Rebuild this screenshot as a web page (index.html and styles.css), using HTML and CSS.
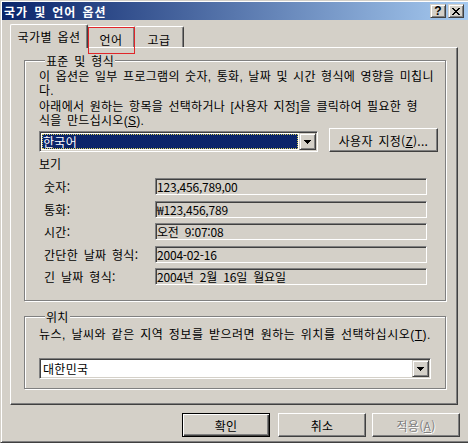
FILE: index.html
```html
<!DOCTYPE html>
<html lang="ko">
<head>
    <meta charset="UTF-8">
    <meta name="viewport" content="width=device-width, initial-scale=1.0">
    <title>국가 및 언어 옵션</title>
    <link rel="stylesheet" href="styles.css">
</head>
<body>
    <div class="window">
        <div class="titlebar">
            <span class="title">국가 및 언어 옵션</span>
            <div class="caption-buttons">
                <span class="cap-btn help">?</span>
                <span class="cap-btn close">
                    <svg width="8" height="7" viewBox="0 0 8 7" shape-rendering="crispEdges">
                        <path d="M0 0h2v1h-2z M6 0h2v1h-2z M1 1h2v1h-2z M5 1h2v1h-2z M2 2h4v1h-4z M3 3h2v1h-2z M2 4h4v1h-4z M1 5h2v1h-2z M5 5h2v1h-2z M0 6h2v1h-2z M6 6h2v1h-2z" fill="#000"/>
                    </svg>
                </span>
            </div>
        </div>

        <div class="client">
            <div class="tabs">
                <div class="tab active">국가별 옵션</div>
                <div class="tab marked">언어<span class="mark"></span></div>
                <div class="tab">고급</div>
            </div>

            <div class="panel">
                <fieldset class="group group-format">
                    <legend>표준 및 형식</legend>
                    <p class="desc">이 옵션은 일부 프로그램의 숫자, 통화, 날짜 및 시간 형식에 영향을 미칩니<br>다.</p>
                    <p class="desc desc-second">아래에서 원하는 항목을 선택하거나 [사용자 지정]을 클릭하여 필요한 형<br>식을 만드십시오(<u>S</u>).</p>

                    <div class="select-row">
                        <div class="combo combo-lang">
                            <span class="combo-value highlighted">한국어</span>
                            <span class="combo-arrow">
                                <svg width="7" height="4" viewBox="0 0 7 4" shape-rendering="crispEdges"><path d="M0 0h7v1h-1v1h-1v1h-1v1h-1v-1h-1v-1h-1v-1h-1z" fill="#000"/></svg>
                            </span>
                        </div>
                        <button class="btn btn-custom">사용자 지정(<u>Z</u>)...</button>
                    </div>

                    <p class="sample-title">보기</p>
                    <div class="samples">
                        <div class="sample-row"><span class="sample-label">숫자:</span><span class="field">123,456,789,00</span></div>
                        <div class="sample-row"><span class="sample-label">통화:</span><span class="field">₩123,456,789</span></div>
                        <div class="sample-row"><span class="sample-label">시간:</span><span class="field">오전 9:07:08</span></div>
                        <div class="sample-row"><span class="sample-label">간단한 날짜 형식:</span><span class="field">2004-02-16</span></div>
                        <div class="sample-row"><span class="sample-label">긴 날짜 형식:</span><span class="field">2004년 2월 16일 월요일</span></div>
                    </div>
                </fieldset>

                <fieldset class="group group-location">
                    <legend>위치</legend>
                    <p class="desc desc-location">뉴스, 날씨와 같은 지역 정보를 받으려면 원하는 위치를 선택하십시오(<u>T</u>).</p>
                    <div class="combo combo-location">
                        <span class="combo-value">대한민국</span>
                        <span class="combo-arrow">
                            <svg width="7" height="4" viewBox="0 0 7 4" shape-rendering="crispEdges"><path d="M0 0h7v1h-1v1h-1v1h-1v1h-1v-1h-1v-1h-1v-1h-1z" fill="#000"/></svg>
                        </span>
                    </div>
                </fieldset>
            </div>

            <div class="actions">
                <button class="btn btn-default">확인</button>
                <button class="btn">취소</button>
                <button class="btn btn-disabled">적용(<u>A</u>)</button>
            </div>
        </div>
    </div>
</body>
</html>
```

FILE: styles.css
```css
:root {
    --face: #d4d0c8;
    --light: #ffffff;
    --shadow: #808080;
    --dark: #404040;
    --title-start: #0a246a;
    --title-end: #a6caf0;
}

* {
    box-sizing: border-box;
    margin: 0;
    padding: 0;
}

html, body {
    width: 468px;
    height: 443px;
    overflow: hidden;
}

body {
    background-color: var(--face);
    font-family: "Noto Sans CJK KR", "Noto Sans", sans-serif;
    font-size: 12px;
    line-height: 13px;
    word-spacing: 2px;
    color: #000;
}

.window {
    width: 468px;
    height: 443px;
    background-color: var(--face);
    border-style: solid;
    border-width: 1px 0 1px 1px;
    border-color: var(--face) var(--dark) var(--dark) var(--face);
    box-shadow: inset 1px 1px var(--light), inset 0 -1px var(--shadow);
    padding: 1px 0 1px 1px;
    display: flex;
    flex-direction: column;
}

/* title bar */
.titlebar {
    height: 18px;
    flex-shrink: 0;
    display: flex;
    align-items: center;
    justify-content: space-between;
    padding: 0 4px 0 2px;
    background: linear-gradient(to right, var(--title-start), var(--title-end));
}

.title {
    color: #fff;
    font-weight: 700;
    letter-spacing: 0.9px;
}

.caption-buttons {
    display: flex;
    gap: 2px;
}

.cap-btn {
    width: 16px;
    height: 14px;
    display: flex;
    align-items: center;
    justify-content: center;
    background-color: var(--face);
    border: 1px solid;
    border-color: var(--face) var(--dark) var(--dark) var(--face);
    box-shadow: inset 1px 1px var(--light), inset -1px -1px var(--shadow);
}

.cap-btn.help {
    font-family: "Liberation Sans", sans-serif;
    font-weight: 700;
    font-size: 12px;
    line-height: 12px;
    padding-bottom: 1px;
}

.cap-btn.close svg {
    display: block;
    margin-top: 1px;
}

/* dialog client area */
.client {
    flex: 1;
    padding: 4px 10px 0 8px;
    display: flex;
    flex-direction: column;
}

.tabs {
    height: 23px;
    display: flex;
    align-items: flex-end;
}

.tab {
    height: 21px;
    padding-top: 6px;
    text-align: center;
    letter-spacing: 0.4px;
    background-color: var(--face);
    border-top: 1px solid var(--light);
    border-left: 1px solid var(--light);
    border-right: 1px solid var(--dark);
    box-shadow: inset -1px 0 var(--shadow);
    border-radius: 2px 2px 0 0;
}

.tab.active {
    width: 78px;
    height: 24px;
    padding-top: 5px;
    margin-bottom: -1px;
    position: relative;
    z-index: 1;
}

.tab.marked {
    width: 47px;
    border-left: none;
    position: relative;
}

.tab:last-child {
    width: 49px;
    border-left: none;
}

/* annotation box drawn over the second tab */
.mark {
    position: absolute;
    left: 0;
    top: 0;
    width: 47px;
    height: 27px;
    border: 1px solid #e0262a;
    z-index: 2;
}

.panel {
    height: 358px;
    background-color: var(--face);
    border-style: solid;
    border-width: 1px;
    border-color: var(--light) var(--dark) var(--dark) var(--light);
    box-shadow: inset -1px -1px var(--shadow);
}

/* group boxes */
.group {
    border: 1px solid var(--shadow);
    box-shadow: inset 1px 1px var(--light), 1px 1px var(--light);
    margin: 6px 11px 0 13px;
    padding: 3px 0 15px 14px;
    min-width: 0;
}

.group legend {
    margin-left: 6px;
    padding: 0 1px;
    line-height: 13px;
    letter-spacing: 0.3px;
    background-color: var(--face);
}

.group-location {
    margin-top: 9px;
    padding: 6px 0 9px 14px;
}

.desc {
    font-family: "Liberation Sans", "Noto Sans CJK KR", sans-serif;
    line-height: 14px;
    white-space: nowrap;
    letter-spacing: 0.3px;
    word-spacing: 1.7px;
}

.desc-second {
    margin-top: 2px;
}

.desc-location {
    line-height: 13px;
    letter-spacing: 0.5px;
}

.select-row {
    display: flex;
    align-items: flex-start;
}

/* combo boxes */
.combo {
    height: 21px;
    display: flex;
    background-color: #fff;
    border: 1px solid;
    border-color: var(--shadow) var(--light) var(--light) var(--shadow);
    box-shadow: inset 1px 1px var(--dark), inset -1px -1px var(--face);
    padding: 1px;
}

.combo-lang {
    width: 279px;
    margin-top: 3px;
}

.combo-location {
    width: 392px;
    margin-top: 16px;
}

.combo-value {
    flex: 1;
    padding-left: 2px;
    line-height: 17px;
    letter-spacing: 0.3px;
}

.combo-value.highlighted {
    margin: 1px;
    padding-left: 1px;
    background-color: var(--title-start);
    color: #fff;
    line-height: 15px;
    outline: 1px dotted #d8d05a;
    outline-offset: -1px;
}

.combo-arrow {
    width: 17px;
    height: 17px;
    flex-shrink: 0;
    display: flex;
    align-items: center;
    justify-content: center;
    background-color: var(--face);
    border: 1px solid;
    border-color: var(--face) var(--dark) var(--dark) var(--face);
    box-shadow: inset 1px 1px var(--light), inset -1px -1px var(--shadow);
}

.combo-arrow svg {
    display: block;
    margin-top: 1px;
}

/* push buttons */
.btn {
    height: 24px;
    width: 88px;
    font-family: inherit;
    font-size: 12px;
    line-height: 13px;
    word-spacing: 2px;
    color: #000;
    background-color: var(--face);
    border: 1px solid;
    border-color: var(--light) var(--dark) var(--dark) var(--light);
    box-shadow: inset -1px -1px var(--shadow);
    letter-spacing: 0.3px;
}

.btn-custom {
    width: 109px;
    margin-left: 11px;
}

.btn-default {
    border: 1px solid #000;
    box-shadow: inset 1px 1px var(--light), inset -1px -1px var(--dark), inset -2px -2px var(--shadow);
    margin-right: 2px;
}

.btn-disabled {
    color: var(--shadow);
    text-shadow: 1px 1px var(--light);
}

/* sample fields */
.sample-title {
    margin-top: 5px;
}

.samples {
    margin-top: 8px;
    padding-left: 5px;
    display: flex;
    flex-direction: column;
    gap: 5.5px;
}

.sample-row {
    display: flex;
    align-items: center;
    height: 17px;
}

.sample-label {
    width: 111px;
    letter-spacing: 0.3px;
}

.field {
    width: 272px;
    height: 17px;
    padding: 1px 0 0 1px;
    line-height: 13px;
    letter-spacing: -0.2px;
    word-spacing: 3px;
    white-space: nowrap;
    overflow: hidden;
    border: 1px solid;
    border-color: var(--shadow) var(--light) var(--light) var(--shadow);
    box-shadow: inset 1px 1px var(--dark), inset -1px -1px var(--face);
}

.actions {
    margin-top: 8px;
    margin-right: -2px;
    display: flex;
    justify-content: flex-end;
    gap: 6px;
}
```
